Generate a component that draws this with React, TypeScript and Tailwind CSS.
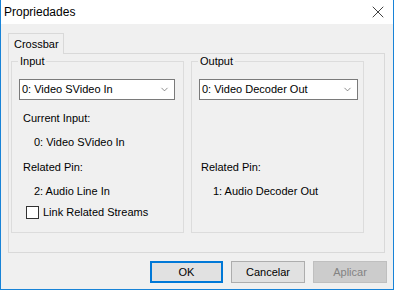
import { X, ChevronDown } from "lucide-react"

const font = { fontFamily: '"Liberation Sans", Arial, sans-serif' }

function Select({ value, width }: { value: string; width: string }) {
  return (
    <div
      className={`${width} h-[21px] bg-white border border-[#7a7a7a] flex items-center justify-between pl-[2px] pr-[4px]`}
    >
      <span className="text-[11px] text-black leading-none">{value}</span>
      <ChevronDown className="w-[11px] h-[11px] text-[#5a5a5a]" strokeWidth={1.5} />
    </div>
  )
}

function GroupBox({ label, children }: { label: string; children: React.ReactNode }) {
  return (
    <div className="relative w-[173px] h-[172px] border border-[#dcdcdc] mt-[7px]">
      <span className="absolute left-[6px] -top-[8px] bg-[#f0f0f0] px-[2px] text-[11px] leading-[14px] text-black">
        {label}
      </span>
      {children}
    </div>
  )
}

export default function App() {
  return (
    <div
      className="w-[394px] h-[290px] flex flex-col border-x border-b border-[#1883d7] bg-[#f0f0f0] text-black"
      style={font}
    >
      {/* title bar */}
      <div className="h-[24px] bg-white flex items-center justify-between pl-[3px] pr-[5px]">
        <span className="text-[12px]">Propriedades</span>
        <X className="w-[20px] h-[20px] text-black" strokeWidth={0.9} />
      </div>

      <div className="flex-1 flex flex-col pt-[8px] pl-[7px] pr-[8px]">
        {/* tab header */}
        <div className="flex">
          <div className="w-[56px] h-[21px] border-x border-t border-[#d9d9d9] bg-[#f0f0f0] flex items-center pl-[5px] text-[11px] relative top-[1px] z-10">
            Crossbar
          </div>
        </div>

        {/* tab panel */}
        <div className="h-[200px] border border-[#d9d9d9] flex gap-[7px] pl-[2px]">
          <GroupBox label="Input">
            <div className="flex flex-col pl-[7px] pt-[17px] text-[11px] leading-[13px]">
              <Select value="0: Video SVideo In" width="w-[156px]" />
              <div className="mt-[12px] pl-[4px]">Current Input:</div>
              <div className="mt-[11px] pl-[15px]">0: Video SVideo In</div>
              <div className="mt-[12px] pl-[4px]">Related Pin:</div>
              <div className="mt-[11px] pl-[15px]">2: Audio Line In</div>
              <label className="mt-[8px] pl-[7px] flex items-center gap-[4px]">
                <span className="w-[13px] h-[13px] bg-white border border-[#333333]" />
                <span>Link Related Streams</span>
              </label>
            </div>
          </GroupBox>
          <GroupBox label="Output">
            <div className="flex flex-col pl-[7px] pt-[17px] text-[11px] leading-[13px]">
              <Select value="0: Video Decoder Out" width="w-[159px]" />
              <div className="mt-[61px] pl-[2px]">Related Pin:</div>
              <div className="mt-[11px] pl-[14px]">1: Audio Decoder Out</div>
            </div>
          </GroupBox>
        </div>

        {/* buttons */}
        <div className="flex justify-end gap-[8px] mt-[8px] text-[11px]">
          <button className="w-[73px] h-[22px] bg-[#e1e1e1] border-2 border-[#0078d7]">OK</button>
          <button className="w-[74px] h-[22px] bg-[#e1e1e1] border border-[#adadad]">Cancelar</button>
          <button className="w-[74px] h-[22px] bg-[#cccccc] border border-[#bfbfbf] text-[#838383] mr-[-2px]">
            Aplicar
          </button>
        </div>
      </div>
    </div>
  )
}
